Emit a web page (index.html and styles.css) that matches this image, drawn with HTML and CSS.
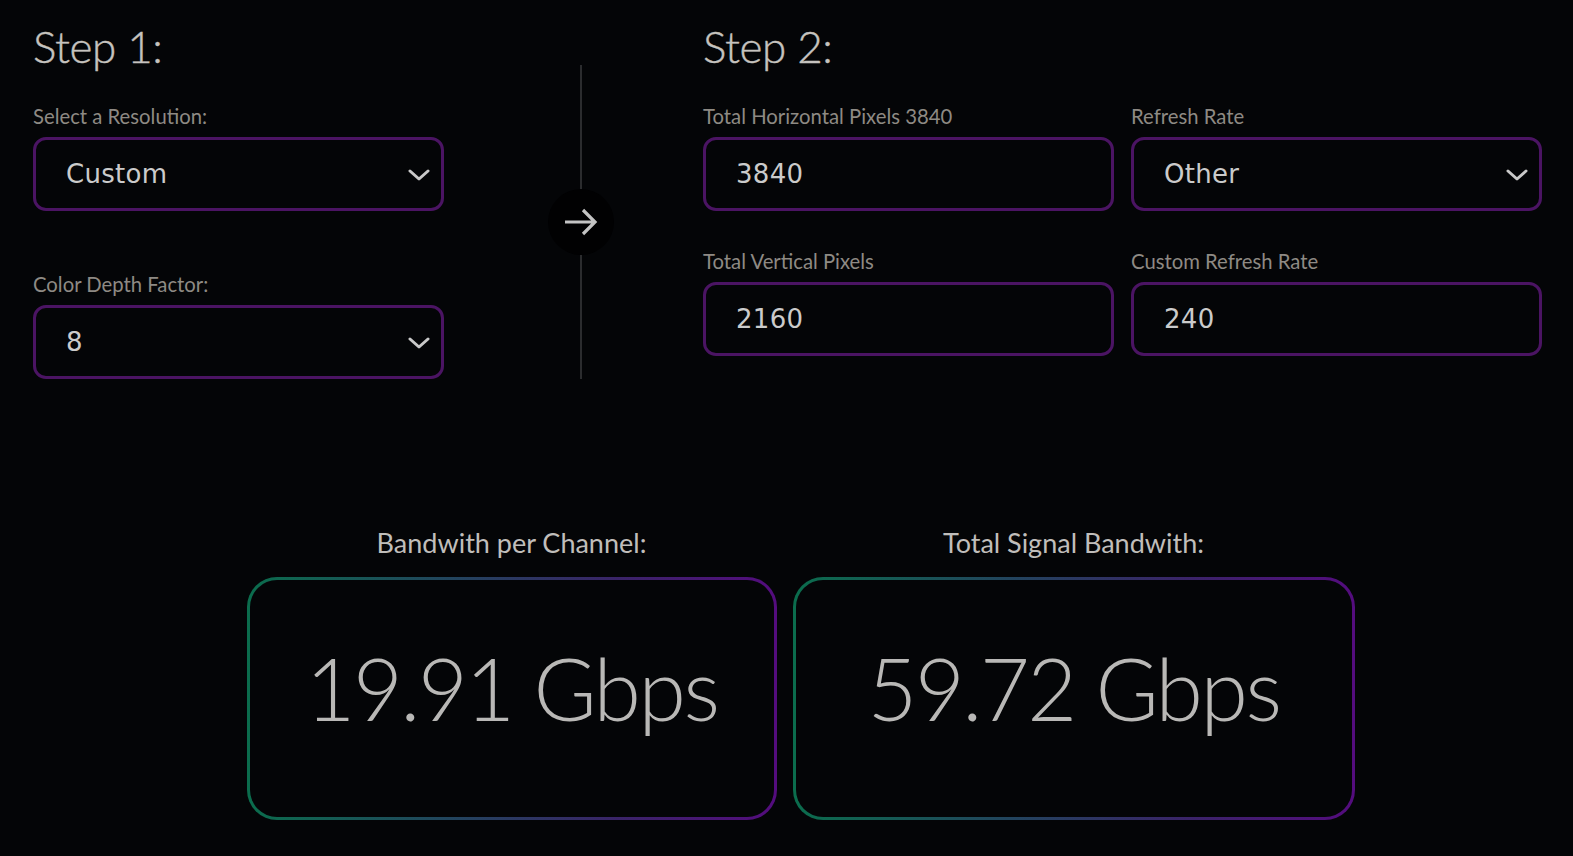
FILE: index.html
```html
<!DOCTYPE html>
<html lang="en">
<head>
<meta charset="utf-8">
<title>Bandwidth Calculator</title>
<link rel="stylesheet" href="styles.css">
</head>
<body>
<main class="page">
  <section class="steps">
    <div class="step step-one">
      <h2 class="step-title">Step 1:</h2>
      <div class="field">
        <label class="field-label">Select a Resolution:</label>
        <div class="control">
          <div class="control-value">Custom</div>
          <svg class="chevron" viewBox="0 0 22 12" width="22" height="12"><path d="M2 2 L11 10 L20 2" fill="none" stroke="#c9c9c9" stroke-width="3" stroke-linecap="round" stroke-linejoin="round"/></svg>
        </div>
      </div>
      <div class="field field-spaced">
        <label class="field-label">Color Depth Factor:</label>
        <div class="control">
          <div class="control-value">8</div>
          <svg class="chevron" viewBox="0 0 22 12" width="22" height="12"><path d="M2 2 L11 10 L20 2" fill="none" stroke="#c9c9c9" stroke-width="3" stroke-linecap="round" stroke-linejoin="round"/></svg>
        </div>
      </div>
    </div>

    <div class="divider">
      <div class="divider-badge">
        <svg viewBox="0 0 40 40" width="40" height="40"><path d="M4 20 H34 M22 8 L34 20 L22 32" fill="none" stroke="#c4c4c4" stroke-width="3.2" stroke-linecap="butt" stroke-linejoin="miter"/></svg>
      </div>
    </div>

    <div class="step step-two">
      <h2 class="step-title">Step 2:</h2>
      <div class="grid">
        <div class="field">
          <label class="field-label">Total Horizontal Pixels 3840</label>
          <div class="control"><div class="control-value">3840</div></div>
        </div>
        <div class="field">
          <label class="field-label">Refresh Rate</label>
          <div class="control">
            <div class="control-value">Other</div>
            <svg class="chevron" viewBox="0 0 22 12" width="22" height="12"><path d="M2 2 L11 10 L20 2" fill="none" stroke="#c9c9c9" stroke-width="3" stroke-linecap="round" stroke-linejoin="round"/></svg>
          </div>
        </div>
        <div class="field">
          <label class="field-label">Total Vertical Pixels</label>
          <div class="control"><div class="control-value">2160</div></div>
        </div>
        <div class="field">
          <label class="field-label">Custom Refresh Rate</label>
          <div class="control"><div class="control-value">240</div></div>
        </div>
      </div>
    </div>
  </section>

  <section class="results">
    <div class="result">
      <div class="result-label">Bandwith per Channel:</div>
      <div class="result-box result-box-channel">19.91 Gbps</div>
    </div>
    <div class="result">
      <div class="result-label">Total Signal Bandwith:</div>
      <div class="result-box result-box-total">59.72 Gbps</div>
    </div>
  </section>
</main>
</body>
</html>
```

FILE: styles.css
```css
* { box-sizing: border-box; }

html, body {
  margin: 0;
  padding: 0;
  background: #040507;
  height: 100%;
}

body {
  font-family: Lato, "Open Sans", sans-serif;
  color: #bdbab6;
}

.page {
  padding: 0 31px 0 33px;
}

.steps {
  display: flex;
  align-items: flex-start;
}

.step-one {
  width: 411px;
}

.step-two {
  width: 839px;
}

.step-title {
  margin: 0;
  padding-top: 18px;
  height: 105px;
  font-size: 44px;
  font-weight: 300;
  line-height: 56px;
  color: #c6c3bf;
  letter-spacing: -0.5px;
  -webkit-text-stroke: 0.4px #c6c3bf;
}

.field-label {
  display: block;
  height: 22px;
  margin-bottom: 10px;
  font-size: 20.3px;
  line-height: 22px;
  color: #8e8a84;
}

.field-spaced {
  margin-top: 62px;
}

.control {
  position: relative;
  height: 74px;
  border: 3px solid #4b1463;
  border-radius: 13px;
  display: flex;
  align-items: center;
  padding-left: 30px;
}

.control-value {
  font-family: "DejaVu Sans", sans-serif;
  font-size: 26px;
  color: #cbcbcb;
  letter-spacing: 0.3px;
}

.chevron {
  position: absolute;
  right: 11px;
  top: 50%;
  margin-top: -5px;
}

.grid {
  display: grid;
  grid-template-columns: 411px 411px;
  column-gap: 17px;
  row-gap: 39px;
}

.divider {
  position: relative;
  width: 2px;
  height: 314px;
  margin: 65px 121px 0 136px;
  background: #2b2c2e;
}

.divider-badge {
  position: absolute;
  left: 50%;
  top: 50%;
  width: 66px;
  height: 66px;
  margin: -33px 0 0 -33px;
  border-radius: 50%;
  background: #010102;
  display: flex;
  align-items: center;
  justify-content: center;
}

.results {
  display: flex;
  justify-content: center;
  gap: 16px;
  margin-top: 153px;
  padding-left: 26px;
}

.result {
  display: flex;
  flex-direction: column;
  align-items: center;
}

.result-label {
  height: 22px;
  margin-bottom: 23px;
  font-size: 27px;
  line-height: 22px;
  color: #c0bebb;
}

.result-box {
  height: 243px;
  padding-bottom: 22px;
  display: flex;
  align-items: center;
  justify-content: center;
  border: 3px solid transparent;
  border-radius: 30px;
  background:
    linear-gradient(#040507, #040507) padding-box,
    linear-gradient(90deg, #0b6d4d 0%, #23435e 40%, #3a2468 70%, #540c7e 100%) border-box;
  font-size: 86px;
  font-weight: 300;
  color: #b9b8b6;
  letter-spacing: -2.5px;
  white-space: nowrap;
}

.result-box-channel {
  width: 530px;
}

.result-box-total {
  width: 562px;
}
```
